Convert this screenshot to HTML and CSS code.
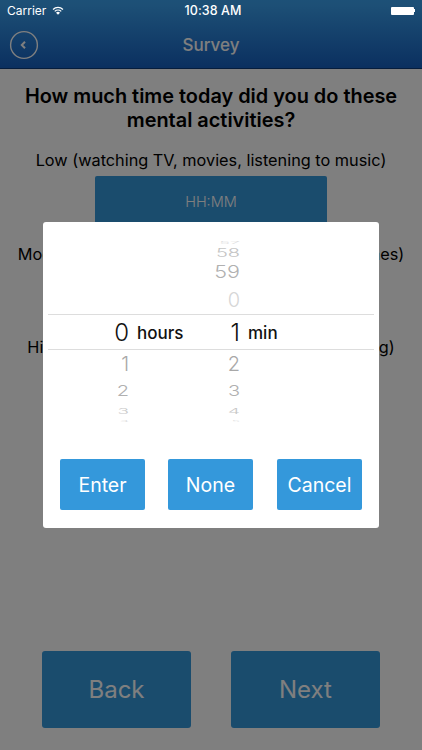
FILE: index.html
```html
<!DOCTYPE html>
<html lang="en">
<head>
<meta charset="utf-8">
<title>Survey</title>
<link rel="stylesheet" href="styles.css">
</head>
<body>
<div class="phone">
  <header class="header">
    <div class="status">
      <div class="status-left">
        <span>Carrier</span>
        <svg class="wifi" viewBox="0 0 14 10" width="12" height="9"><path d="M7 10 4.7 7.5a3.3 3.3 0 0 1 4.6 0Z" fill="#fff"/><path d="M3.2 6a5.5 5.5 0 0 1 7.6 0M1.2 3.8a8.4 8.4 0 0 1 11.6 0" fill="none" stroke="#fff" stroke-width="1.5"/></svg>
      </div>
      <div class="status-time">10:38 AM</div>
      <div class="status-right">
        <span class="battery"></span><span class="battery-tip"></span>
      </div>
    </div>
    <div class="nav">
      <span class="nav-back">
        <svg viewBox="0 0 30 30" width="30" height="30"><circle cx="15" cy="15" r="13.4" fill="none" stroke="#fff" stroke-width="1.4"/><path d="M16 11.8 12.8 15l3.2 3.2" fill="none" stroke="#fff" stroke-width="2"/></svg>
      </span>
      <span class="nav-title">Survey</span>
    </div>
  </header>
  <main class="content">
    <h1 class="question">How much time today did you do these mental activities?</h1>
    <section class="activity">
      <p class="activity-label">Low (watching TV, movies, listening to music)</p>
      <div class="time-field">HH:MM</div>
    </section>
    <section class="activity">
      <p class="activity-label">Moderate (reading, socializing, doing card games)</p>
      <div class="time-field">HH:MM</div>
    </section>
    <section class="activity">
      <p class="activity-label">High (studying, doing puzzles, problem solving)</p>
      <div class="time-field">HH:MM</div>
    </section>
  </main>
  <footer class="footer">
    <div class="nav-button">Back</div>
    <div class="nav-button">Next</div>
  </footer>
  <div class="overlay">
    <div class="dialog">
      <div class="picker">
        <div class="row r-57"><span></span><span></span><span class="num">57</span><span></span></div>
        <div class="row r-58"><span></span><span></span><span class="num">58</span><span></span></div>
        <div class="row r-59"><span></span><span></span><span class="num">59</span><span></span></div>
        <div class="row r-0"><span></span><span></span><span class="num">0</span><span></span></div>
        <div class="row selected"><span class="num">0</span><span class="unit">hours</span><span class="num">1</span><span class="unit">min</span></div>
        <div class="row r-2"><span class="num">1</span><span></span><span class="num">2</span><span></span></div>
        <div class="row r-3"><span class="num">2</span><span></span><span class="num">3</span><span></span></div>
        <div class="row r-4"><span class="num">3</span><span></span><span class="num">4</span><span></span></div>
        <div class="row r-5"><span class="num">4</span><span></span><span class="num">5</span><span></span></div>
      </div>
      <div class="actions">
        <div class="action">Enter</div>
        <div class="action">None</div>
        <div class="action action-last">Cancel</div>
      </div>
    </div>
  </div>
</div>
</body>
</html>
```
FILE: styles.css
```css
* { box-sizing: border-box; }
html, body { margin: 0; padding: 0; }
body {
  width: 422px;
  height: 750px;
  overflow: hidden;
  font-family: Inter, "Liberation Sans", sans-serif;
  background: #fff;
}
.phone {
  position: relative;
  width: 422px;
  height: 750px;
  display: flex;
  flex-direction: column;
  color: #000;
}
.header {
  height: 69px;
  flex: none;
  background: linear-gradient(#3ba2ef 0%, #3a9fec 8%, #1660c0 100%);
  border-bottom: 1px solid #0c3a7a;
}
.status {
  position: relative;
  z-index: 3;
  height: 21px;
  display: grid;
  grid-template-columns: 1fr auto 1fr;
  align-items: center;
  padding: 0 7px;
  color: #fff;
  font-size: 12px;
}
.status-left { display: flex; align-items: center; gap: 6px; }
.status-time { font-weight: 500; font-size: 12.5px; letter-spacing: .1px; padding-left: 4px; }
.status-right { display: flex; align-items: center; justify-content: flex-end; }
.battery { width: 23px; height: 8px; background: #fff; border-radius: 1px; }
.battery-tip { width: 1.5px; height: 3px; background: #fff; }
.nav {
  position: relative;
  height: 47px;
  display: flex;
  align-items: center;
  justify-content: center;
  color: #fff;
}
.nav-back { position: absolute; left: 9px; top: 9px; width: 30px; height: 30px; }
.nav-title { font-size: 17px; font-weight: 500; }
.content {
  flex: 1;
  padding: 15px 0 0;
  display: flex;
  flex-direction: column;
  align-items: center;
}
.question {
  margin: 0 0 18px;
  width: 400px;
  text-align: center;
  font-size: 19.9px;
  line-height: 24px;
  font-weight: 600;
}
.activity { display: flex; flex-direction: column; align-items: center; height: 93.5px; }
.activity-label {
  margin: 0 0 6px;
  font-size: 16.3px;
  line-height: 20px;
  white-space: nowrap;
}
.time-field {
  width: 232px;
  height: 50px;
  border-radius: 2px;
  background: #3498db;
  color: #fff;
  font-size: 14.5px;
  font-weight: 300;
  display: flex;
  align-items: center;
  justify-content: center;
}
.footer {
  flex: none;
  display: flex;
  justify-content: space-between;
  padding: 0 42px 22px;
}
.nav-button {
  width: 149px;
  height: 77px;
  border-radius: 3px;
  background: #3498db;
  color: #fff;
  font-size: 24px;
  display: flex;
  align-items: center;
  justify-content: center;
}
.overlay {
  position: absolute;
  inset: 0;
  z-index: 2;
  background: rgba(0, 0, 0, .5);
  padding: 222px 43px 0;
}
.dialog {
  width: 336px;
  height: 306px;
  background: #fff;
  border-radius: 3px;
  padding: 16px 17px 18px;
  display: flex;
  flex-direction: column;
}
.picker { margin: 0 -12px; }
.row {
  display: grid;
  grid-template-columns: 81px 55px 56px 1fr;
  grid-template-rows: minmax(0, 1fr);
  align-items: center;
  color: #aaa;
  font-size: 20px;
  font-weight: 300;
  line-height: 1;
}
.num { text-align: right; display: block; transform-origin: center; }
.r-57 { height: 10px; font-size: 18px; color: #dcdcdc; }
.r-57 .num { transform: scaleY(.2); }
.r-58 { height: 10px; font-size: 20px; color: #c4c4c4; }
.r-58 .num { transform: scaleY(.55); }
.r-59 { height: 28px; font-size: 21.5px; color: #b0b0b0; }
.r-59 .num { transform: scaleY(.83); }
.r-0 { height: 28px; font-size: 20px; color: #d6d6d6; }
.selected {
  height: 36px;
  color: #111;
  font-size: 24px;
  border-top: 1px solid #ddd;
  border-bottom: 1px solid #ddd;
  padding-top: 2px;
}
.unit { font-size: 17px; font-weight: 500; padding-left: 8px; color: #111; }
.r-2 { height: 28px; font-size: 20px; color: #a8a8a8; }
.r-3 { height: 26px; font-size: 20px; color: #b0b0b0; }
.r-3 .num { transform: scaleY(.75); }
.r-4 { height: 14px; font-size: 19px; color: #c8c8c8; }
.r-4 .num { transform: scaleY(.4); }
.r-5 { height: 6px; font-size: 14px; color: #dedede; }
.r-5 .num { transform: scaleY(.15); }
.actions {
  margin-top: auto;
  display: flex;
  gap: 23px;
}
.action {
  width: 85px;
  height: 51px;
  background: #3498db;
  border-radius: 2px;
  color: #fff;
  font-size: 19.5px;
  display: flex;
  align-items: center;
  justify-content: center;
}
.action-last { margin-left: 1px; }
```
